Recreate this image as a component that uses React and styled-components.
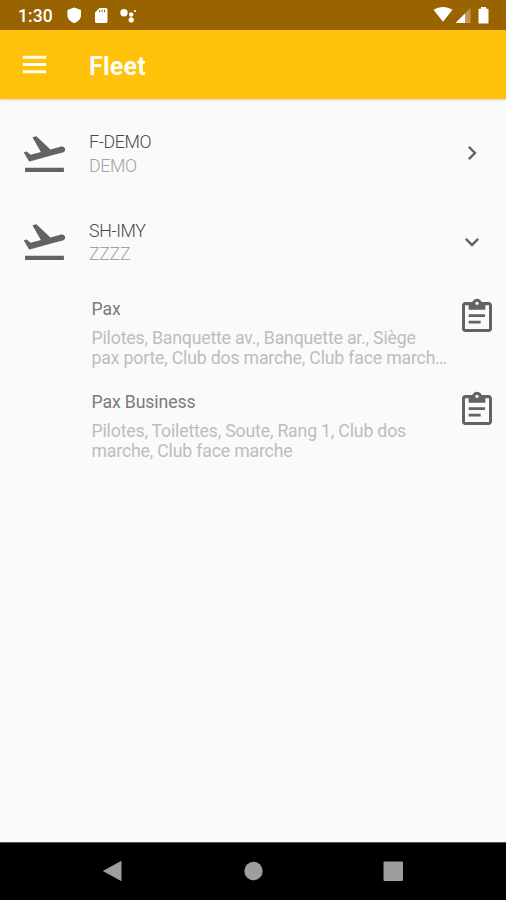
import styled, { createGlobalStyle } from "styled-components";

const GlobalStyle = createGlobalStyle`
  * {
    box-sizing: border-box;
  }
  body {
    margin: 0;
    font-family: Roboto, "Noto Sans", sans-serif;
    background: #fafafa;
  }
  svg {
    display: block;
    flex-shrink: 0;
  }
`;

const Screen = styled.div`
  height: 900px;
  display: flex;
  flex-direction: column;
  background: #fafafa;
  overflow: hidden;
`;

const StatusBar = styled.div`
  height: 30px;
  flex-shrink: 0;
  display: flex;
  align-items: center;
  justify-content: space-between;
  padding: 0 15px 0 18px;
  background: #996300;
  color: white;
`;

const StatusGroup = styled.div`
  display: flex;
  align-items: center;
`;

const Clock = styled.span`
  width: 48px;
  padding-top: 2px;
  font-size: 17.5px;
  font-weight: 500;
  letter-spacing: 0.1px;
`;

const AppBar = styled.header`
  height: 69px;
  flex-shrink: 0;
  display: flex;
  align-items: center;
  padding: 0 17px;
  background: #ffc10a;
  color: #fffdf2;
  box-shadow: 0 1px 2px rgba(0, 0, 0, 0.16);
`;

const Title = styled.h1`
  margin: 3px 0 0 37px;
  font-size: 25px;
  font-weight: 700;
  letter-spacing: 0.2px;
`;

const Content = styled.main`
  flex: 1;
  padding-top: 10px;
`;

const AircraftRow = styled.div`
  height: 88.5px;
  display: flex;
  align-items: center;
  padding: 0 20px;
  color: #636363;
`;

const AircraftText = styled.div`
  flex: 1;
  margin-left: 20px;
  padding-top: 1px;
  font-size: 17.8px;
  font-weight: 300;
  line-height: 23.5px;
  letter-spacing: -0.35px;
`;

const Registration = styled.div`
  color: #484848;
`;

const AircraftType = styled.div`
  color: #a2a2a2;
`;

const Layout = styled.div`
  height: 92.7px;
  display: flex;
  align-items: flex-start;
  padding: 11px 9px 0 91.5px;
  color: #636363;
`;

const LayoutText = styled.div`
  width: 358px;
  margin-right: auto;
`;

const LayoutName = styled.div`
  font-size: 17.7px;
  line-height: 24px;
  letter-spacing: -0.13px;
  color: #7b7b7b;
`;

const LayoutSeats = styled.div`
  margin-top: 7px;
  font-size: 17.7px;
  line-height: 20.2px;
  letter-spacing: -0.18px;
  color: #bdbdbd;
  white-space: pre-line;
`;

const NavBar = styled.nav`
  height: 58px;
  flex-shrink: 0;
  display: flex;
  align-items: center;
  justify-content: space-between;
  padding: 0 102px 2px;
  background: black;
  border-top: 1px solid #555;
`;

const Icon = ({ size, children }) => (
  <svg width={size} height={size} viewBox="0 0 24 24" fill="currentColor">
    {children}
  </svg>
);

const TakeoffIcon = () => (
  <Icon size={49}>
    <path d="M2.5 19h19v2h-19zm19.57-9.36c-.21-.8-1.04-1.28-1.84-1.06L14.92 10l-6.9-6.43-1.93.51 4.14 7.17-4.97 1.33-1.97-1.54-1.45.39 1.82 3.16.77 1.33 1.6-.43 5.31-1.42 4.35-1.16L21 11.49c.81-.23 1.28-1.05 1.07-1.85z" />
  </Icon>
);

const ClipboardIcon = () => (
  <Icon size={40}>
    <path d="M7 14.2h7.2v1.7H7zm0-3.9h9.8V12H7z" />
    <path
      fillRule="evenodd"
      d="M19 3h-4.18C14.4 1.84 13.3 1 12 1s-2.4.84-2.82 2H5c-1.1 0-2 .9-2 2v14c0 1.1.9 2 2 2h14c1.1 0 2-.9 2-2V5c0-1.1-.9-2-2-2zm-7-.2c.55 0 1 .45 1 1s-.45 1-1 1-1-.45-1-1 .45-1 1-1zM19.2 19.2H4.8V5H7v2.6h10V5h2.2z"
    />
  </Icon>
);

const ChevronIcon = ({ open }) => (
  <Icon size={28}>
    {open ? (
      <path d="M7.41 8.59 12 13.17l4.59-4.58L18 10l-6 6-6-6z" />
    ) : (
      <path d="M8.59 16.59 13.17 12 8.59 7.41 10 6l6 6-6 6z" />
    )}
  </Icon>
);

const Aircraft = ({ registration, type, open }) => (
  <AircraftRow>
    <TakeoffIcon />
    <AircraftText>
      <Registration>{registration}</Registration>
      <AircraftType>{type}</AircraftType>
    </AircraftText>
    <ChevronIcon open={open} />
  </AircraftRow>
);

const layouts = [
  {
    name: "Pax",
    seats:
      "Pilotes, Banquette av., Banquette ar., Siège\npax porte, Club dos marche, Club face march…",
  },
  {
    name: "Pax Business",
    seats:
      "Pilotes, Toilettes, Soute, Rang 1, Club dos\nmarche, Club face marche",
  },
];

const App = () => {
  return (
    <>
      <GlobalStyle />
      <Screen>
        <StatusBar>
          <StatusGroup>
            <Clock>1:30</Clock>
            <svg width="71" height="18" viewBox="0 0 71 18" fill="white">
              <path d="M8.2 1.5 15 4v5c0 3.9-2.9 6.8-6.8 8.2C4.3 15.8 1.4 12.9 1.4 9V4z" />
              <path
                fillRule="evenodd"
                d="M33.5 2H40q1.5 0 1.5 1.5v12q0 1.500-1.5 1.500H30.500q-1.500 0-1.500-1.500V6.500zM33.200 3.700v2.600h1V3.700zm2.400 0v2.600h1V3.700zm2.400 0v2.600h1V3.700z"
              />
              <circle cx="58" cy="6.8" r="3.7" />
              <circle cx="65.2" cy="8.5" r="2.2" />
              <circle cx="65.2" cy="13.9" r="2.6" />
              <circle cx="69" cy="5" r="1.1" />
            </svg>
          </StatusGroup>
          <svg width="58" height="18" viewBox="0 0 58 18" fill="white">
            <path d="M.5 3.8C6-.1 14-.1 19.5 3.800L10 15.800z" />
            <path d="M37.5 2v15h-15z" fillOpacity=".35" />
            <path d="M32 7.500V17h-9.500z" />
            <path d="M48 1h5v1.700h2.500V17q0 .5-.5.500h-9q-.5 0-.5-.5V2.700H48z" />
          </svg>
        </StatusBar>
        <AppBar>
          <Icon size={35}>
            <path d="M4 6h16v2H4zm0 5h16v2H4zm0 5h16v2H4z" />
          </Icon>
          <Title>Fleet</Title>
        </AppBar>
        <Content>
          <Aircraft registration="F-DEMO" type="DEMO" />
          <Aircraft registration="SH-IMY" type="ZZZZ" open />
          {layouts.map((layout) => (
            <Layout key={layout.name}>
              <LayoutText>
                <LayoutName>{layout.name}</LayoutName>
                <LayoutSeats>{layout.seats}</LayoutSeats>
              </LayoutText>
              <ClipboardIcon />
            </Layout>
          ))}
        </Content>
        <NavBar>
          <svg width="20" height="22" viewBox="0 0 20 22" fill="#9e9e9e">
            <path d="M.8 11 19.5.7v20.6z" />
          </svg>
          <svg width="20" height="20" viewBox="0 0 20 20" fill="#9e9e9e">
            <circle cx="10.5" cy="10" r="9.2" />
          </svg>
          <svg width="21" height="20" viewBox="0 0 21 20" fill="#9e9e9e">
            <rect x=".5" y=".5" width="19.5" height="19.5" rx="1" />
          </svg>
        </NavBar>
      </Screen>
    </>
  );
};

export default App;
